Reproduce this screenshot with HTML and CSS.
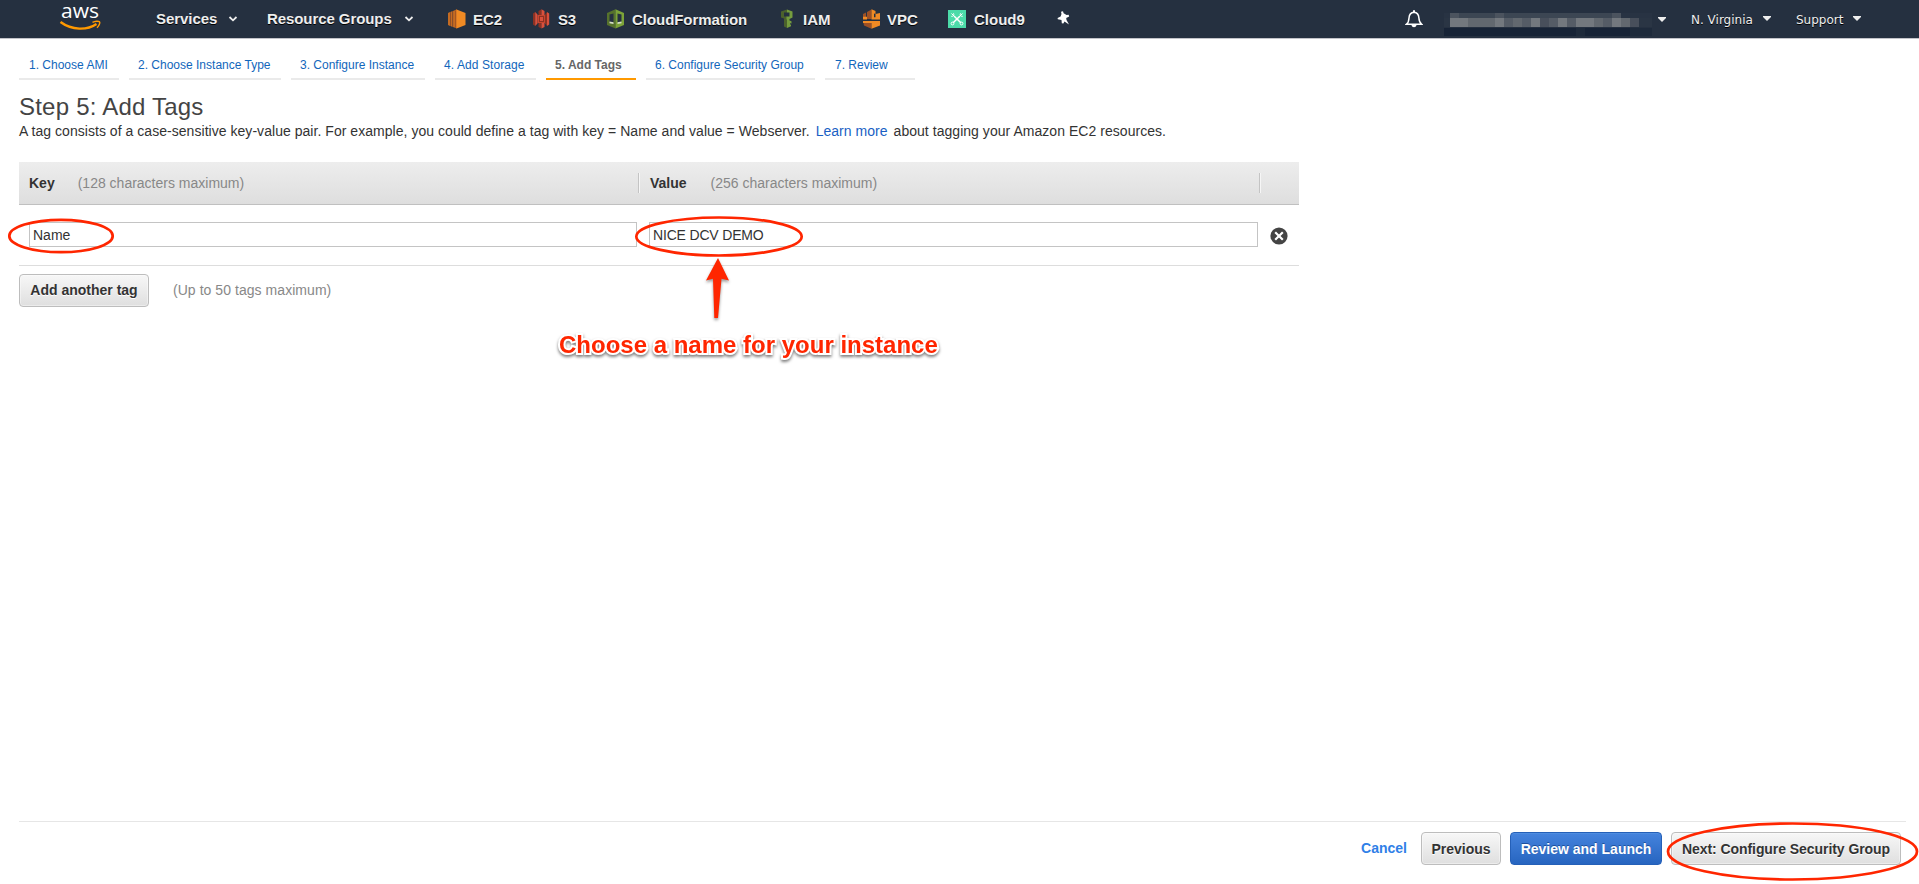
FILE: index.html
```html
<!DOCTYPE html>
<html lang="en">
<head>
<meta charset="utf-8">
<title>Step 5: Add Tags</title>
<link rel="stylesheet" href="styles.css">
</head>
<body>
<header class="nav">
  <svg class="logo" width="44" height="38" viewBox="0 0 44 38">
    <text x="1" y="18" class="logo-text" textLength="38" lengthAdjust="spacingAndGlyphs">aws</text>
    <path d="M.5 22C12 30.500 27 30.500 36.500 24" fill="none" stroke="#f90" stroke-width="2.400"/>
    <path d="M32.500 22.300C35 21 38.500 20.800 39.500 21.800S38.800 26 37 27.800" fill="none" stroke="#f90" stroke-width="1.500"/>
  </svg>
  <div class="nav-menu services"><span>Services</span><svg class="chev" width="10" height="6" viewBox="0 0 10 6"><path d="M1.500 1L5 4.300 8.500 1"/></svg></div>
  <div class="nav-menu groups"><span>Resource Groups</span><svg class="chev" width="10" height="6" viewBox="0 0 10 6"><path d="M1.500 1L5 4.300 8.500 1"/></svg></div>
  <div class="shortcut ec2">
    <svg width="18" height="20" viewBox="0 0 18 20"><path fill="#c46b22" d="M0 4l2-1v14l-2-1zM2.500 3l2-1v16l-2-1z"/><path fill="#c46b22" d="M5 2L9 .3v19.200L5 18z"/><path fill="#9d5025" d="M2 3h.7v14H2zM4.500 2.300h.7v15.500h-.7zM7 1.500h.8V19H7z"/><path fill="#f08a24" d="M8.500 .5L17.500 4v12l-9 3.500z"/></svg>
    <span>EC2</span></div>
  <div class="shortcut s3">
    <svg width="18" height="20" viewBox="0 0 18 20"><path fill="#8c3123" d="M0 4.500L2.200 3v14L0 15.500zM5.500 2L8.500 .3v19.200L5.500 18z"/><path fill="#d9503c" d="M2.200 3l2.300 2.500v9L2.200 17zM8.500 .3L11.500 2v16l-3 1.500zM14 3l2.200 1.500v11L14 17z"/><path fill="#8c3123" d="M12 5.500L14 3v14l-2-2.500z"/><path fill="#c8452f" d="M4.500 6h7.500v8H4.500z"/><path fill="#8c3123" d="M6 7h5v6H6z"/><path fill="#d9503c" d="M7 8h3v4H7z"/></svg>
    <span>S3</span></div>
  <div class="shortcut cf">
    <svg width="18" height="20" viewBox="0 0 18 20"><path fill="#56722c" d="M0 4L8.500.3v19.200L0 16z"/><path fill="#7ca338" d="M8.500.3L17 4v12l-8.500 3.500z"/><path fill="#253040" d="M2.500 5.500L6.500 4.500v9l-4-.7zM10.500 4.500l4 1v7.300l-4 .7z"/><path fill="#d5dfc5" d="M2.500 12.500l4 .8V15l-4-.8zM10.500 13.300l4-.8v1.700l-4 .8z"/></svg>
    <span>CloudFormation</span></div>
  <div class="shortcut iam">
    <svg width="14" height="20" viewBox="0 0 14 20"><path fill="#4b612c" d="M0 2.500L6 .5v3H3v4h3v3L0 8.500zM3 9.500l3 1V19l-3-1.500z"/><path fill="#759c3e" d="M6 .5l5.500 2v6L8.500 10v1.500l2 .7v2.300l-1.500-.3v1l1 .5v1.500L6 19v-8.500h-.5v-3h3v-4H6z"/></svg>
    <span>IAM</span></div>
  <div class="shortcut vpc">
    <svg width="18" height="20" viewBox="0 0 18 20"><path fill="#9d5025" d="M0 5l3-1.500V10H0zM4 3l4.500-2.500V10H4zM0 12h8.500v7.800L1 16.500z"/><path fill="#f08a24" d="M8.500.3L12.500 2v3l-1.500-.5V8.300h1.500V5L17 4v6.500H8.500zM8.500 12H17v4.500l-8.500 3.300zM0 7.800h4v2.700H0zM0 12h8.500v2H0z"/></svg>
    <span>VPC</span></div>
  <div class="shortcut c9">
    <svg width="18" height="18" viewBox="0 0 18 18"><path fill="#4cdba9" d="M0 0h18v18H0z"/><g fill="none" stroke="#fff"><path d="M6 6l6.800 6.800M12 6l-6.800 6.800" stroke-width="1.500"/><path d="M5.500 3.300a2 2 0 0 1-2.200 3M12.500 3.300a2 2 0 0 0 2.200 3M3.500 3.500L6.500 6.500M14.500 3.500L11.500 6.500" stroke-width="1"/><circle cx="4.500" cy="13.500" r="1.400"/><circle cx="13.500" cy="13.500" r="1.400"/></g></svg>
    <span>Cloud9</span></div>
  <svg class="pin" width="14" height="15" viewBox="0 0 14 15"><path fill="#fff" d="M4 .7L6 .3l.6 2 3 1.700 2-.3.600 1.800-3 1.500.3 2L12 13.500 7.500 10.500 6.300 12.500l-1.500-.2L4.500 9 .8 8.300.6 7l3-1.500L4.500 3z"/></svg>
  <svg class="bell" width="18" height="18" viewBox="0 0 18 18"><path d="M1.500 14.200c2-1.500 2.300-3 2.500-6.200C4.200 4.500 6 2.500 9 2.300c3 .2 4.700 2.200 4.900 5.700.2 3.200.6 4.700 2.600 6.200z" fill="none" stroke="#fff" stroke-width="1.500"/><path fill="#fff" d="M8 .3h2v2H8zM6.500 15h5c-.5 3-4.500 3-5 0z"/></svg>
  <div class="account">
    <svg width="208" height="23" viewBox="0 0 208 23" shape-rendering="crispEdges">
      <path fill="#283343" d="M0 0h208v5H0z"/><path fill="#2a3544" d="M0 5h208v9H0z"/><path fill="#172336" d="M0 15h208v8H0z"/>
      <path fill="#3c4653" d="M6 0h171v5H6z"/><path fill="#4b535e" d="M6 0h9v5H6zM51 0h9v5h-9zM168 0h9v5h-9z"/>
      <path fill="#62686f" d="M6 5h180v9H6z"/><path fill="#73787e" d="M6 5h18v9H6zM51 5h9v9h-9zM87 5h9v9h-9zM114 5h9v9h-9zM132 5h18v9h-18zM168 5h9v9h-9z"/><path fill="#555c66" d="M60 5h9v9h-9zM78 5h9v9h-9zM105 5h9v9h-9zM123 5h9v9h-9zM159 5h9v9h-9z"/><path fill="#484f5b" d="M96 5h9v9h-9zM186 5h9v9h-9z"/>
      <path fill="#1e2a3b" d="M132 15h9v8h-9zM186 15h22v8h-22z"/>
    </svg>
    <i class="caret"></i>
  </div>
  <div class="pref region"><span>N. Virginia</span><i class="caret"></i></div>
  <div class="pref support"><span>Support</span><i class="caret"></i></div>
</header>

<main>
  <nav class="tabs">
    <a class="t1">1. Choose AMI</a><a class="t2">2. Choose Instance Type</a><a class="t3">3. Configure Instance</a><a class="t4">4. Add Storage</a><a class="t5 active">5. Add Tags</a><a class="t6">6. Configure Security Group</a><a class="t7">7. Review</a>
  </nav>
  <h1>Step 5: Add Tags</h1>
  <p class="desc">A tag consists of a case-sensitive key-value pair. For example, you could define a tag with key = Name and value = Webserver. <a>Learn more</a> about tagging your Amazon EC2 resources.</p>

  <section class="table">
    <div class="thead">
      <div class="th key"><b>Key</b><span>(128 characters maximum)</span></div>
      <div class="th value"><b>Value</b><span>(256 characters maximum)</span></div>
      <div class="th"></div>
    </div>
    <div class="row">
      <div class="field">Name</div>
      <div class="field dcv">NICE DCV DEMO</div>
      <svg class="remove" width="18" height="18" viewBox="0 0 18 18"><circle cx="9" cy="9" r="8.600" fill="#444"/><path d="M5.200 5.200l7.600 7.600M12.800 5.200l-7.600 7.600" stroke="#fff" stroke-width="2.200"/></svg>
    </div>
  </section>
  <div class="add"><div class="btn add-btn"><span>Add another tag</span></div><span class="hint">(Up to 50 tags maximum)</span></div>
</main>

<footer>
  <a class="cancel">Cancel</a>
  <div class="btn prev"><span>Previous</span></div>
  <div class="btn primary"><span>Review and Launch</span></div>
  <div class="btn next"><span>Next: Configure Security Group</span></div>
</footer>

<svg class="marks" width="1919" height="884" viewBox="0 0 1919 884">
  <g fill="none" stroke="#ff2600" stroke-width="2.700">
    <ellipse cx="61" cy="236" rx="51.700" ry="16.200"/>
    <ellipse cx="719" cy="236.500" rx="82.700" ry="19"/>
    <ellipse cx="1792.500" cy="851.500" rx="124.500" ry="28"/>
  </g>
  <path class="arrow" d="M718 258l11 22.500-7.500-1.800L718 318h-3.700L713 278.700l-7 1.800z"/>
</svg>
<div class="callout">Choose a name for your instance</div>
</body>
</html>
```
FILE: styles.css
```css
* { box-sizing: border-box; }
body {
  margin: 0;
  height: 884px;
  position: relative;
  display: flex;
  flex-direction: column;
  overflow: hidden;
  background: #fff;
  color: #444;
  font: 14px/20px "Liberation Sans", Arial, sans-serif;
}
svg { display: block; flex: none; }

/* top bar */
.nav {
  flex: none;
  display: flex;
  align-items: center;
  height: 39px;
  padding: 0 0 0 60px;
  background: #253040;
  border-bottom: 1px solid #c3c3c9;
  color: #eee;
  font-weight: bold;
  font-size: 15px;
  white-space: nowrap;
  text-shadow: 0 1px 0 #000;
}
.logo { margin-right: 52px; overflow: visible; }
.logo-text { font: 20px "Open Sans", sans-serif; fill: #fff; text-shadow: none; }
.nav-menu, .shortcut, .account, .pref { display: flex; align-items: center; flex: none; }
.nav-menu { justify-content: space-between; }
.services { width: 82px; margin-right: 29px; letter-spacing: -.05px; }
.groups { width: 147px; margin-right: 34px; letter-spacing: -.08px; }
.chev path { fill: none; stroke: #eee; stroke-width: 1.8; }
.shortcut { gap: 7px; }
.ec2 { width: 85px; }
.s3 { width: 74px; letter-spacing: -.3px; }
.cf { width: 174px; letter-spacing: -.05px; }
.iam { width: 82px; gap: 8px; }
.vpc { width: 85px; gap: 6px; }
.c9 { width: 109px; gap: 8px; }
.shortcut span { padding-top: 1px; }
.pin { margin-top: -2px; }
.bell { margin-left: 334px; }
.account { margin: 13px 0 0 21px; gap: 6px; align-items: flex-start; height: 23px; align-self: flex-start; }
.account .caret { margin-top: 4px; }
.caret { width: 8px; height: 5px; background: #eee; clip-path: polygon(0 0, 100% 0, 100% 20%, 50% 100%, 0 20%); }
.pref { font: 12px/20px "DejaVu Sans", Verdana, sans-serif; justify-content: space-between; padding-top: 1px; }
.pref .caret { margin-top: -2px; }
.region { width: 80px; margin-left: 25px; letter-spacing: 0; }
.support { width: 65px; margin-left: 25px; }

/* wizard steps */
main { padding: 0 19px; }
.tabs { display: flex; gap: 10px; padding-top: 11px; white-space: nowrap; }
.tabs a { height: 30px; padding: 5px 0 0 10px; font-size: 12px; color: #1166bb; border-bottom: 2px solid #eaeaea; }
.tabs .active { color: #666; font-weight: bold; border-color: #f90; }
.t1 { width: 100px; } .t2 { width: 152px; } .t3 { width: 134px; } .t4 { width: 101px; letter-spacing: .08px; }
.t5 { width: 90px; } .t6 { width: 169px; } .t7 { width: 90px; }
.tabs .t2, .tabs .t3, .tabs .t4, .tabs .t5, .tabs .t6 { padding-left: 9px; }
h1 { margin: 12px 0 0; font-size: 24px; line-height: 30px; font-weight: normal; letter-spacing: .22px; }
.desc { margin: -1px 0 0; white-space: nowrap; line-height: 20px; color: #333; letter-spacing: .04px; }
.desc a { color: #1a5fc4; margin: 0 2px; }

/* tag table */
.table { width: 1280px; margin-top: 21px; border-bottom: 1px solid #ddd; }
.thead {
  display: grid;
  grid-template-columns: 619px 621px 40px;
  align-items: center;
  height: 43px;
  background: linear-gradient(#ededed, #dedede);
  border-bottom: 1px solid #c0c0c0;
}
.th { display: flex; align-items: center; height: 20px; border-left: 1px solid #c4c4c4; box-shadow: inset 1px 0 #f6f6f6; padding-left: 11px; }
.th.key { border: 0; box-shadow: none; padding-left: 10px; }
.th b { color: #333; }
.th span { color: #888; }
.key span { margin-left: 23px; }
.value span { margin-left: 24px; }
.row { display: grid; grid-template-columns: 608px 609px 18px; column-gap: 12px; align-items: center; height: 60px; padding: 0 0 2px 10px; }
.field { height: 25px; border: 1px solid #c4c4c4; padding: 2px 3px; color: #333; }
.dcv { letter-spacing: -.17px; }
.remove { margin-top: 3px; }
.add { display: flex; align-items: center; gap: 24px; margin-top: 8px; }
.hint { color: #888; letter-spacing: .05px; padding-bottom: 2px; }

.btn {
  display: flex;
  align-items: center;
  justify-content: center;
  height: 33px;
  border: 1px solid #bdbdbd;
  border-radius: 4px;
  background: linear-gradient(#f7f7f7, #dfdfdf);
  box-shadow: inset 0 0 0 1px rgba(255, 255, 255, .4);
  color: #333;
  font-weight: bold;
  white-space: nowrap;
  text-shadow: 0 1px #fff;
}
.add-btn { width: 130px; padding-bottom: 2px; }

/* wizard actions */
footer {
  margin: auto 13px 0 19px;
  flex: none;
  height: 63px;
  border-top: 1px solid #e6e6e6;
  display: flex;
  justify-content: flex-end;
  padding: 10px 5px 0 0;
  gap: 9px;
}
.cancel { color: #2f80e7; font-weight: bold; line-height: 33px; margin-right: 5px; }
.prev { width: 80px; }
.primary { width: 152px; color: #fff; border-color: #2560b8; background: linear-gradient(#4583dd, #2765c0); text-shadow: 0 -1px #1d4f9c; box-shadow: inset 0 1px #4f8de0; }
.next { width: 230px; letter-spacing: -.06px; }

/* annotations over the page */
.marks { position: absolute; left: 0; top: 0; }
.arrow { fill: #ff2600; filter: drop-shadow(0 2px 1.5px rgba(0, 0, 0, .4)); }
.callout {
  position: absolute;
  left: 559px;
  top: 331px;
  font-weight: bold;
  font-size: 24px;
  line-height: 28px;
  white-space: nowrap;
  color: #ff2600;
  -webkit-text-stroke: 4px #fff;
  paint-order: stroke fill;
  filter: drop-shadow(0 2px 1.5px rgba(0, 0, 0, .5));
}
```
